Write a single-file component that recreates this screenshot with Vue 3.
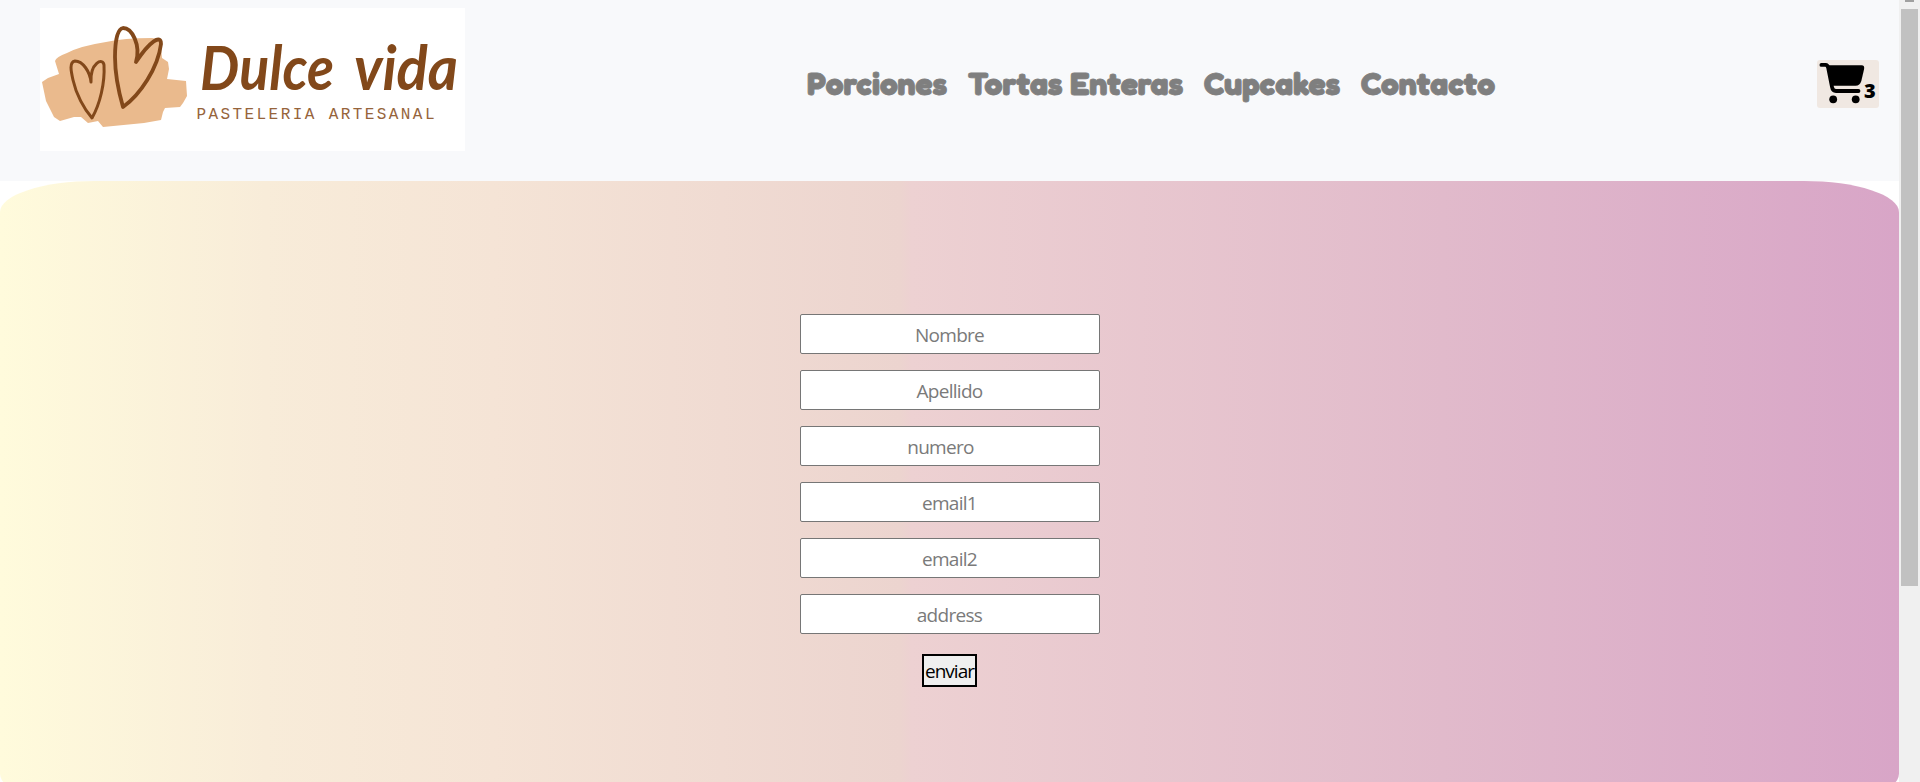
<script setup>
const links = [
  { label: 'Porciones', width: 141 },
  { label: 'Tortas Enteras', width: 216 },
  { label: 'Cupcakes', width: 137 },
  { label: 'Contacto', width: 135 },
]
const fields = [
  { name: 'Nombre', type: 'text' },
  { name: 'Apellido', type: 'text' },
  { name: 'numero', type: 'number' },
  { name: 'email1', type: 'email' },
  { name: 'email2', type: 'email' },
  { name: 'address', type: 'text' },
]
</script>

<template>
  <div class="window">
    <div class="page">
      <header class="header">
        <svg class="logo" width="425" height="143" viewBox="0 0 425 143">
          <rect width="425" height="143" fill="#fff" />
          <path fill="#eaba8d" d="M15 53 Q16 49 27 45 Q40 38 66 34 Q84 30 112 30 L118 31 L121 40 L122 50 L128 54 L129 61 L127 71 L146 73 L147 88 L143 95 L140 99 L125 100 L123 104 L121 112 L104 115 L63 119 L58 113 L48 115 L41 109 L34 109 L20 113 L14 109 L6 93 L2 74 L8 70 L19 66 Z" />
          <g fill="none" stroke="#82481a" stroke-linecap="round" stroke-linejoin="round">
            <path stroke-width="3" d="M51 74 C50 64 43 53 35 53 C29 54 31 63 33 72 C36 86 44 101 52 110 C60 96 65 75 64 57 C63 49 50 55 51 74" />
            <path stroke-width="3.8" d="M96 54 C101 37 92 20 83 20 C77 21 75 35 75 49 C75 66 79 85 83 99 C100 87 118 60 121 36 C121 26 110 33 96 54" />
          </g>
          <text class="brand" x="160" y="82" textLength="134" lengthAdjust="spacingAndGlyphs">Dulce</text>
          <text class="brand" x="314" y="82" textLength="104" lengthAdjust="spacingAndGlyphs">vida</text>
          <text class="tagline" x="156.5" y="110.500" textLength="238" lengthAdjust="spacing">PASTELERIA ARTESANAL</text>
        </svg>
        <nav class="nav">
          <svg v-for="l in links" :key="l.label" class="link" :width="l.width" height="46">
            <text x="1" y="33" :textLength="l.width - 1" lengthAdjust="spacingAndGlyphs">{{ l.label }}</text>
          </svg>
        </nav>
        <button class="cart">
          <svg width="46" height="42" viewBox="0 0 46 42">
            <path d="M3.4 4.9 H7.5 Q9.7 5 10.2 8 L14 27 Q14.7 31 18 31 H40.5" fill="none" stroke="#000" stroke-width="3.8" stroke-linecap="round" />
            <path d="M9 5.2 H43.5 Q47 5.2 46 9.5 L43.3 21 Q42 25.7 37.5 25.7 H13 Z" />
            <circle cx="15.2" cy="39.3" r="3.9" />
            <circle cx="37.7" cy="39.3" r="3.9" />
          </svg>
          <span>3</span>
        </button>
      </header>
      <main class="content">
        <form class="form" novalidate @submit.prevent>
          <input v-for="f in fields" :key="f.name" class="field" :class="f.type" :type="f.type" :placeholder="f.name">
          <button class="send">enviar</button>
        </form>
      </main>
    </div>
    <div class="scrollbar">
      <div class="up"></div>
      <div class="thumb"></div>
    </div>
  </div>
</template>

<style>
body { margin: 0; overflow: hidden; }
</style>

<style scoped>
* { box-sizing: border-box; }
.window { display: flex; height: 782px; overflow: hidden; background: #fff; }
.page { width: 1899px; height: 782px; overflow: hidden; }
.header { height: 181px; padding: 8px 20px 30px 40px; display: flex; align-items: flex-start; background: #f8f9fb; }
.logo { flex: none; display: block; overflow: visible; }
.brand { font: italic 700 62px "Brush Script MT", "Segoe Script", Lato, sans-serif; fill: #82481a; }
.tagline { font: 16px "Liberation Mono", monospace; fill: #96643b; }
.nav { display: flex; gap: 20px; margin: 54px 0 0 341px; }
.link { display: block; overflow: visible; }
.link text { font: 800 31px "Fredoka One", Fredoka, "Open Sans", sans-serif; fill: #7f7f7f; stroke: #7f7f7f; stroke-width: 0.8px; stroke-linejoin: round; }
.cart { margin: 52px 0 0 auto; width: 62px; height: 48px; padding: 0 2px 0 1px; display: flex; align-items: flex-start; border: 0; border-radius: 3px; background: #f0e8e2; color: #000; }
.cart svg { flex: none; overflow: visible; }
.cart span { margin: 19px 0 0 0; font: 800 20px/24px "Fredoka One", "Open Sans", sans-serif; }
.content {
  height: 624px;
  padding-top: 133px;
  border-radius: 5%;
  background: linear-gradient(90deg, #fffbdc 0%, #f8ecd9 14%, #f5e4d6 26%, #ecd4cf 47.4%, #edd1d2 48%, #e1bacb 76%, #d8a5c7 100%);
}
.form { width: 300px; margin: 0 auto; display: flex; flex-direction: column; align-items: center; gap: 16px; }
.field {
  width: 300px; height: 40px; padding: 2px 2px 1px; border: 1px solid #767676; border-radius: 2px;
  background: #fff; text-align: center; font: 400 19px "Segoe UI", "Open Sans", sans-serif; letter-spacing: -0.7px;
}
.field::placeholder { color: #7a7a7a; opacity: 1; }
.field.number { padding-right: 5px; }
.field.number::-webkit-inner-spin-button { opacity: 0; }
.send {
  width: 55px; height: 33px; margin-top: 4px; padding: 0; border: 2px solid #000; background: #efefef; color: #000;
  font: 400 19px/28px "Segoe UI", "Open Sans", sans-serif; letter-spacing: -1px; white-space: nowrap;
}
.scrollbar { width: 21px; padding: 0 2px; background: #f0f0f0; }
.up { width: 9px; height: 2px; margin: 0 auto 7px 4px; background: #a0a0a0; }
.thumb { width: 17px; height: 577px; background: #c1c1c1; }
</style>
